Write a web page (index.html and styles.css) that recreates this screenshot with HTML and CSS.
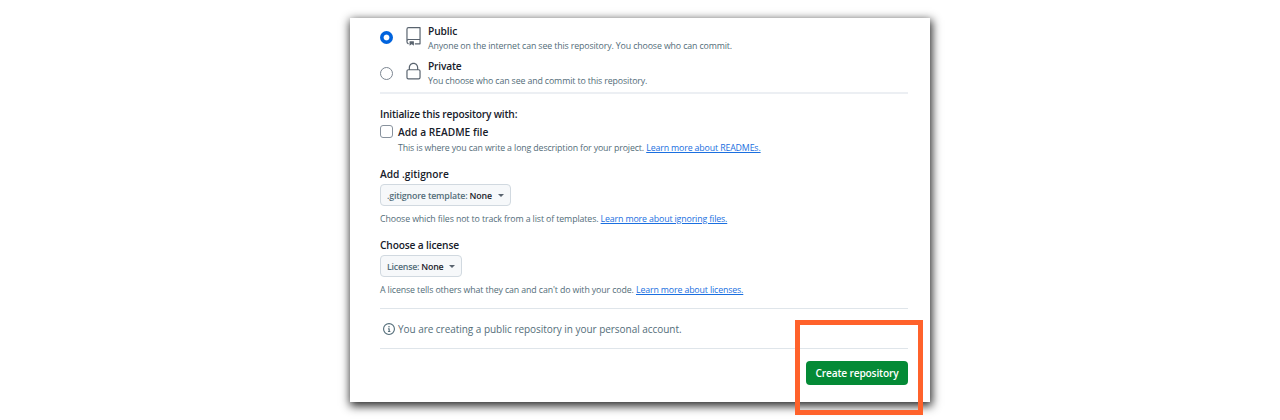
FILE: index.html
```
<!DOCTYPE html>
<html lang="en"><head><meta charset="utf-8"><title>Create repository</title><link rel="stylesheet" href="styles.css"></head>
<body>
<main class="card">
  <label class="option option-public">
    <span class="radio radio-on"></span>
    <svg class="option-icon" viewBox="0 0 24 24"><path fill-rule="evenodd" d="M3 2.75A2.75 2.75 0 0 1 5.75 0h14.5a.75.75 0 0 1 .75.75v20.5a.75.75 0 0 1-.75.75h-6a.75.75 0 0 1 0-1.5h5.25v-4H6A1.5 1.5 0 0 0 4.5 18v.75c0 .716.43 1.334 1.05 1.605a.75.75 0 0 1-.6 1.374A3.25 3.25 0 0 1 3 18.75ZM19.5 1.5H5.75c-.69 0-1.25.56-1.25 1.25v12.651A2.989 2.989 0 0 1 6 15h13.5Z"/><path d="M7 18.25a.25.25 0 0 1 .25-.25h5a.25.25 0 0 1 .25.25v5.01a.25.25 0 0 1-.397.201l-2.206-1.604a.25.25 0 0 0-.294 0L7.397 23.46a.25.25 0 0 1-.397-.2v-5.01Z"/></svg>
    <span class="option-text"><span class="title title-public">Public</span><span class="note">Anyone on the internet can see this repository. You choose who can commit.</span></span>
  </label>
  <label class="option option-private">
    <span class="radio"></span>
    <svg class="option-icon icon-lock" viewBox="0 0 24 24"><path fill-rule="evenodd" d="M6 9V7.25C6 3.845 8.503 1 12 1s6 2.845 6 6.25V9h.5a2.5 2.5 0 0 1 2.5 2.5v8a2.5 2.5 0 0 1-2.5 2.5h-13A2.5 2.5 0 0 1 3 19.5v-8A2.5 2.5 0 0 1 5.5 9Zm-1.5 2.5v8a1 1 0 0 0 1 1h13a1 1 0 0 0 1-1v-8a1 1 0 0 0-1-1h-13a1 1 0 0 0-1 1Zm3-4.25V9h9V7.25c0-2.67-1.922-4.75-4.5-4.75-2.578 0-4.5 2.08-4.5 4.75Z"/></svg>
    <span class="option-text"><span class="title title-private">Private</span><span class="note">You choose who can see and commit to this repository.</span></span>
  </label>
  <hr class="rule rule-thick">
  <section class="init">
    <h2 class="title heading-init">Initialize this repository with:</h2>
    <label class="readme"><span class="checkbox"></span><span class="title title-readme">Add a README file</span></label>
    <p class="note note-readme">This is where you can write a long description for your project. <a class="link" href="#">Learn more about READMEs.</a></p>
  </section>
  <section class="field">
    <h2 class="title heading-ignore">Add .gitignore</h2>
    <button class="select select-ignore"><span class="select-label">.gitignore template: <b class="select-value">None</b></span><span class="caret"></span></button>
    <p class="note note-ignore">Choose which files not to track from a list of templates. <a class="link" href="#">Learn more about ignoring files.</a></p>
  </section>
  <section class="field field-license">
    <h2 class="title heading-license">Choose a license</h2>
    <button class="select select-license"><span class="select-label">License: <b class="select-value">None</b></span><span class="caret"></span></button>
    <p class="note note-license">A license tells others what they can and can't do with your code. <a class="link" href="#">Learn more about licenses.</a></p>
  </section>
  <hr class="rule">
  <div class="info">
    <svg class="info-icon" viewBox="0 0 16 16"><path d="M0 8a8 8 0 1 1 16 0A8 8 0 0 1 0 8Zm8-6.5a6.5 6.5 0 1 0 0 13 6.5 6.5 0 0 0 0-13ZM6.5 7.75A.75.75 0 0 1 7.25 7h1a.75.75 0 0 1 .75.75v2.75h.25a.75.75 0 0 1 0 1.5h-2a.75.75 0 0 1 0-1.5h.25v-2h-.25a.75.75 0 0 1-.75-.75ZM8 6a1 1 0 1 1 0-2 1 1 0 0 1 0 2Z"/></svg>
    <span class="info-text">You are creating a public repository in your personal account.</span>
  </div>
  <hr class="rule">
  <div class="actions"><button class="create">Create repository</button></div>
  <div class="highlight"></div>
</main>
</body></html>
```
FILE: styles.css
```
* { box-sizing: border-box; }
body { margin: 0; height: 420px; padding-top: 18px; background: #fff; overflow: hidden; font-family: "Open Sans", "Noto Sans", sans-serif; color: #17202a; }
.card { position: relative; width: 580px; height: 384px; margin-left: 350px; padding: 4px 22px 0 30px; background: #fff; box-shadow: 1px 3px 9px 1px rgba(0,0,0,.85); }
.title { display: block; margin: 0; font-size: 10.2px; line-height: 14px; font-weight: 600; letter-spacing: 0; white-space: nowrap; }
.title-public { letter-spacing: -.12px; }
.title-private { letter-spacing: -.18px; }
.title-readme { letter-spacing: .02px; }
.heading-init { letter-spacing: -.18px; }
.heading-license { letter-spacing: -.15px; }
.note { display: block; margin: 0; padding-top: 1px; font-size: 8.8px; line-height: 15px; letter-spacing: -.13px; color: #536d79; white-space: nowrap; }
.note-ignore { letter-spacing: -.115px; }
.note-license { letter-spacing: -.115px; }
.link { color: #1a6fe0; letter-spacing: -.14px; text-decoration: underline; text-underline-offset: 1px; }
.option { display: flex; align-items: center; height: 31px; }
.option-private { margin-top: 4px; }
.option-private .note { padding-top: 1px; }
.radio { width: 13px; height: 13px; border: 1px solid #7c8691; border-radius: 50%; }
.option-private .radio { margin-top: 1px; }
.radio-on { border: 0; background: radial-gradient(circle, #fff 2.5px, #0063dd 3.3px); }
.option-icon { width: 19px; height: 19px; margin: 0 0 2px 11px; fill: #59636e; }
.option-text { padding-top: 2px; margin-left: 5px; }
.rule { height: 1px; margin: 0; border: 0; background: #dfe5ea; }
.rule-thick { height: 2px; margin-top: 4px; background: #eceff3; }
.init { padding-top: 13px; }
.readme { display: flex; align-items: center; height: 14px; margin-top: 4px; gap: 5px; }
.checkbox { width: 13px; height: 13px; margin-bottom: 1px; border: 1px solid #88929d; border-radius: 3px; }
.note-readme { margin: 1px 0 -2px 18px; }
.field { padding-top: 13px; height: 71px; }
.field-license { height: 83px; }
.select { display: flex; align-items: center; justify-content: space-between; height: 22px; margin: 3px 0 5px; padding: 0 6px; border: 1px solid #d1d9e0; border-radius: 4px; background: #f6f8fa; color: #536d79; font: 600 8.8px "Open Sans", "Noto Sans", sans-serif; letter-spacing: -.16px; white-space: nowrap; }
.select-label { padding-top: 1px; }
.select-value { color: #1d252d; font-weight: 600; }
.select-ignore { width: 131px; }
.select-license { width: 82px; letter-spacing: -.22px; }
.caret { border: 3px solid transparent; border-top-color: #59636e; border-bottom: 0; }
.info { display: flex; align-items: center; height: 39px; padding: 1px 0 0 3px; gap: 3px; }
.info-icon { width: 12px; height: 12px; fill: #536d79; }
.info-text { font-size: 10px; letter-spacing: -.04px; color: #536d79; white-space: nowrap; }
.actions { display: flex; justify-content: flex-end; padding-top: 12px; }
.create { width: 102px; height: 24px; padding: 0; border: 0; border-radius: 4px; background: #048a36; color: #fff; font: 600 10.2px "Open Sans", "Noto Sans", sans-serif; letter-spacing: -.18px; white-space: nowrap; }
.highlight { position: absolute; left: 445px; top: 302px; width: 128px; height: 95px; border: 5px solid #ff622b; }
```
